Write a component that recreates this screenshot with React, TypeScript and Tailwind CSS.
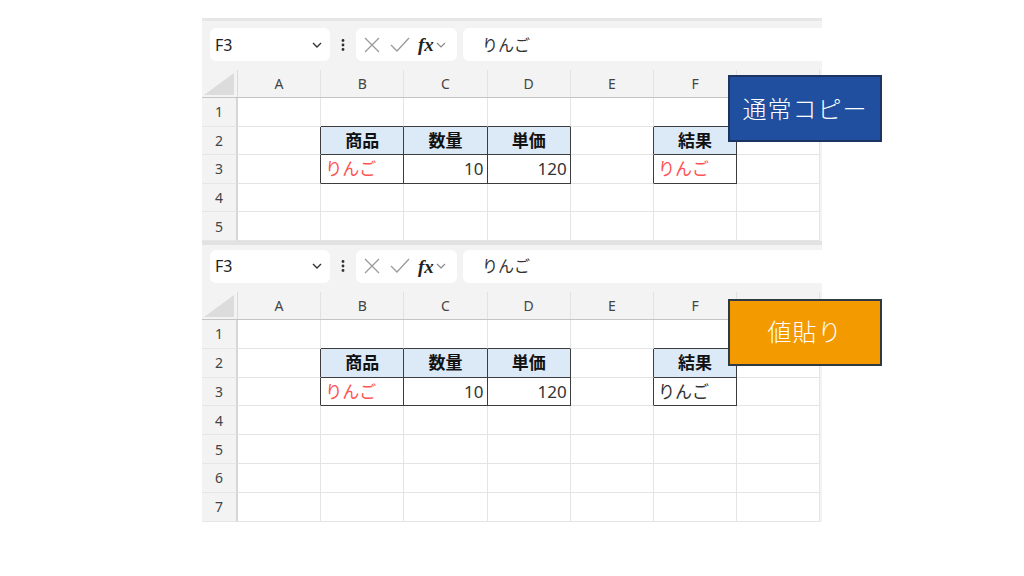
import React from "react";

const COLS = ["A", "B", "C", "D", "E", "F", "G"];
const JP = { fontFamily: '"Noto Sans", "Noto Sans CJK JP", sans-serif' };

type Cell = { text: string; kind: "head" | "red" | "num" | "result" };

// table cells live in rows 2-3, columns B-D and F
const TABLE: Record<string, Cell> = {
  "2-1": { text: "商品", kind: "head" },
  "2-2": { text: "数量", kind: "head" },
  "2-3": { text: "単価", kind: "head" },
  "2-5": { text: "結果", kind: "head" },
  "3-1": { text: "りんご", kind: "red" },
  "3-2": { text: "10", kind: "num" },
  "3-3": { text: "120", kind: "num" },
  "3-5": { text: "りんご", kind: "result" },
};

const inTable = (r: number, c: number) => !!TABLE[`${r}-${c}`];

function FormulaBar({ top }: { top: string }) {
  return (
    <div className={`flex items-center pl-[8px] ${top}`}>
      <div className="flex h-[33px] w-[120px] items-center justify-between rounded-md bg-white pl-[5px] pr-[6px] text-[16px] text-[#222]" style={JP}>
        <span>F3</span>
        <svg width="14" height="14" viewBox="0 0 14 14" fill="none" stroke="#333" strokeWidth="1.4">
          <path d="M3 5l4 4 4-4" />
        </svg>
      </div>
      <div className="flex w-[26px] justify-center">
        <svg width="4" height="14" viewBox="0 0 4 14" fill="#333">
          <circle cx="2" cy="2.5" r="1.4" />
          <circle cx="2" cy="7" r="1.4" />
          <circle cx="2" cy="11.5" r="1.4" />
        </svg>
      </div>
      <div className="flex h-[33px] w-[101px] items-center rounded-md bg-white pl-[6px]">
        <svg width="20" height="20" viewBox="0 0 20 20" fill="none" stroke="#9a9a9a" strokeWidth="1.3">
          <path d="M3 3l14 14M17 3L3 17" />
        </svg>
        <svg className="ml-[7px]" width="22" height="20" viewBox="0 0 22 20" fill="none" stroke="#9a9a9a" strokeWidth="1.3">
          <path d="M2 10l6 6L20 3" />
        </svg>
        <span className="ml-[7px] text-[19px] font-bold italic leading-none text-[#222]" style={{ fontFamily: '"Liberation Serif", serif' }}>
          fx
        </span>
        <svg className="ml-[1px]" width="12" height="12" viewBox="0 0 12 12" fill="none" stroke="#888" strokeWidth="1.1">
          <path d="M2 4l4 4 4-4" />
        </svg>
      </div>
      <div className="ml-[6px] flex h-[33px] flex-1 items-center rounded-l-md bg-white pl-[19px] text-[16px] text-[#333]" style={JP}>
        りんご
      </div>
    </div>
  );
}

function Sheet({ rows, redResult, rowH, headTop }: { rows: number; redResult: boolean; rowH: string; headTop: string }) {
  return (
    <div className="w-[620px] bg-[#f3f3f3]">
      <FormulaBar top={headTop} />
      {/* column header */}
      <div className="mt-[9px] flex h-[28px] border-b border-[#c4c4c4]">
        <div className="relative w-[36px] border-r border-[#dadada]">
          <svg className="absolute bottom-[2px] right-[3px]" width="30" height="22" viewBox="0 0 30 22">
            <path d="M30 0V22H0Z" fill="#dcdcdc" />
          </svg>
        </div>
        {COLS.map((c) => (
          <div key={c} className="flex w-[83.2px] items-center justify-center border-r border-[#e2e2e2] text-[14px] text-[#444]" style={JP}>
            {c}
          </div>
        ))}
      </div>
      {Array.from({ length: rows }, (_, i) => i + 1).map((r) => (
        <div key={r} className={`flex ${rowH}`}>
          <div className="flex w-[36px] items-center justify-center border-r-2 border-b border-r-[#d6d6d6] border-b-[#e6e6e6] text-[14px] text-[#444]" style={JP}>
            {r}
          </div>
          {COLS.map((_, c) => {
            const cell = TABLE[`${r}-${c}`];
            const darkR = inTable(r, c) || inTable(r, c + 1);
            const darkB = inTable(r, c) || inTable(r + 1, c);
            const kind = cell?.kind;
            const red = kind === "red" || (kind === "result" && redResult);
            return (
              <div
                key={c}
                className={`flex w-[83.2px] items-center border-r border-b text-[17px] ${darkR ? "border-r-[#3c3c3c]" : "border-r-[#e4e4e4]"} ${darkB ? "border-b-[#3c3c3c]" : "border-b-[#e4e4e4]"} ${kind === "head" ? "justify-center bg-[#dce9f7] font-bold text-[#111]" : "bg-white"} ${kind === "num" ? "justify-end pr-[3px] text-[#333]" : ""} ${kind === "red" || kind === "result" ? "pl-[4px]" : ""} ${red ? "text-[#ff5252]" : kind === "result" ? "text-[#333]" : ""}`}
                style={JP}
              >
                {cell?.text ?? ""}
              </div>
            );
          })}
        </div>
      ))}
    </div>
  );
}

function Callout({ text, tone }: { text: string; tone: "blue" | "orange" }) {
  return (
    <div
      className={`absolute left-[526px] flex h-[67px] w-[154px] items-center justify-center border-2 text-[24px] font-light tracking-[1px] text-white ${tone === "blue" ? "top-[57px] border-[#1d3461] bg-[#1f4f9e]" : "top-[54px] border-[#2e3a44] bg-[#f29a00]"}`}
      style={JP}
    >
      {text}
    </div>
  );
}

export default function App() {
  return (
    <div className="h-[576px] w-[1024px] bg-white pl-[202px] pt-[18px]">
      <div className="relative">
        <div className="h-[3px] w-[620px] bg-[#e6e6e6]" />
        <Sheet rows={5} redResult rowH="h-[28.6px]" headTop="pt-[7px]" />
        <Callout text="通常コピー" tone="blue" />
      </div>
      <div className="h-[4px] w-[620px] bg-[#e2e2e2]" />
      <div className="relative">
        <Sheet rows={7} redResult={false} rowH="h-[28.8px]" headTop="pt-[5px]" />
        <Callout text="値貼り" tone="orange" />
      </div>
    </div>
  );
}
